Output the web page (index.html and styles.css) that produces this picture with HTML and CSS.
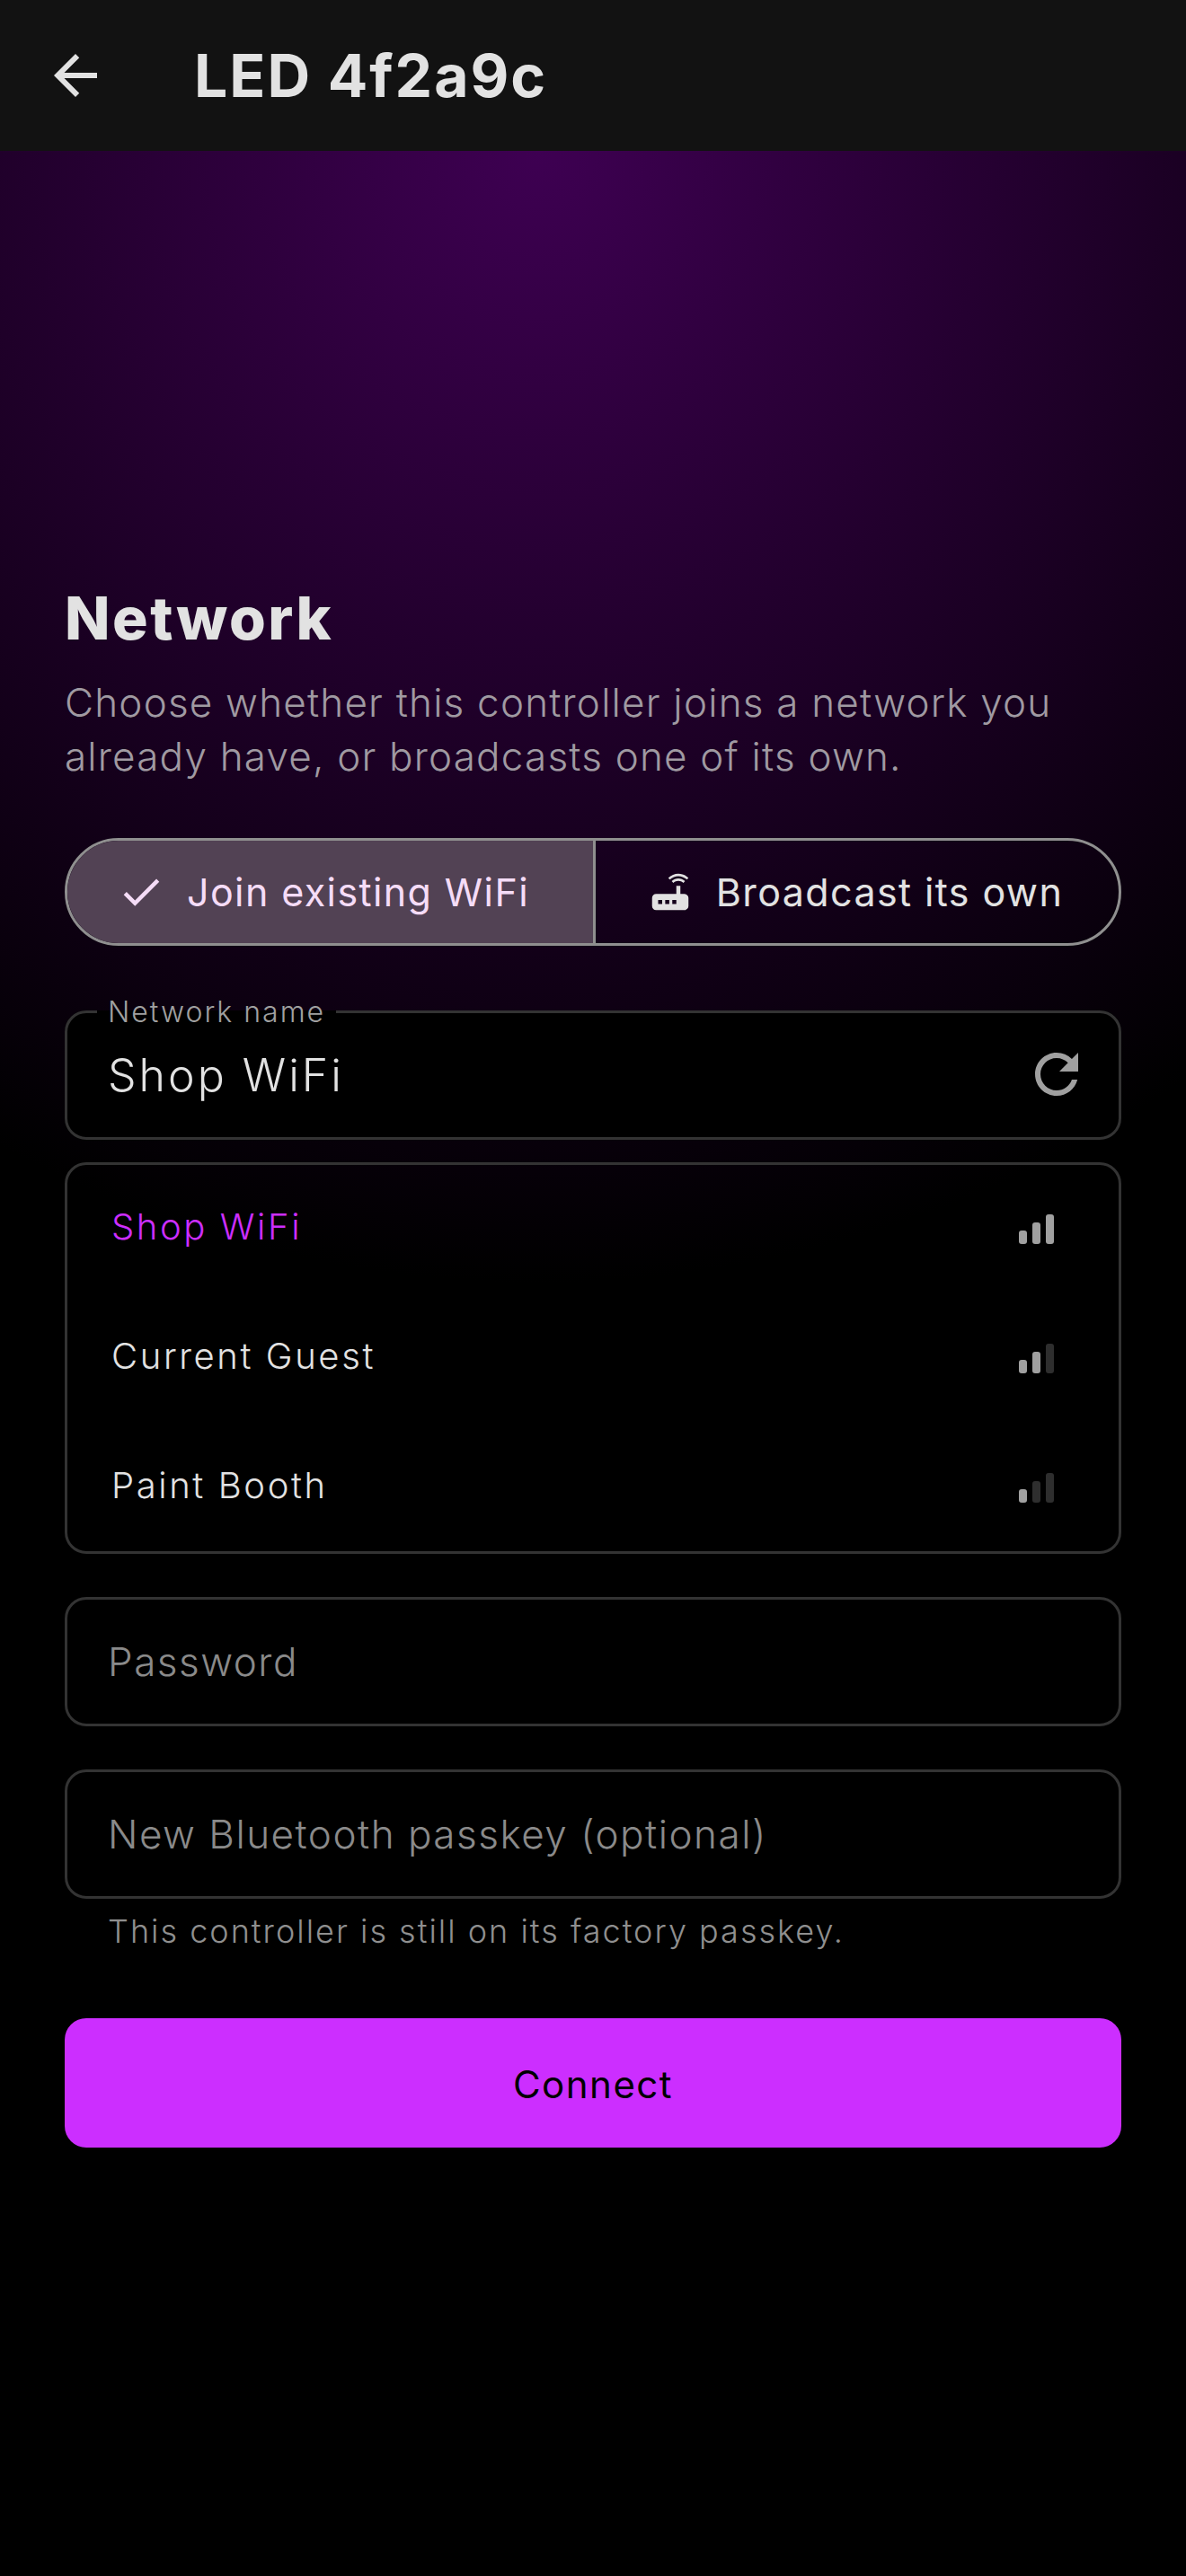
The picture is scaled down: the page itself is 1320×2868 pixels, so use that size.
FILE: index.html
```html
<!DOCTYPE html>
<html lang="en">
<head>
    <meta charset="UTF-8">
    <meta name="viewport" content="width=device-width, initial-scale=1.0">
    <title>LED 4f2a9c</title>
    <link rel="stylesheet" href="styles.css">
</head>
<body>
    <header class="app-bar">
        <svg class="back-icon" viewBox="0 0 24 24"><path d="M20 11H7.83l5.59-5.59L12 4l-8 8 8 8 1.41-1.41L7.83 13H20v-2z"/></svg>
        <h1>LED 4f2a9c</h1>
    </header>

    <main class="content">
        <h2>Network</h2>
        <p class="intro">Choose whether this controller joins a network you already have, or broadcasts one of its own.</p>

        <div class="segments">
            <div class="segment selected">
                <svg class="seg-icon" viewBox="0 0 24 24"><path d="M9 16.17L4.83 12l-1.42 1.41L9 19 21 7l-1.41-1.41z"/></svg>
                <span>Join existing WiFi</span>
            </div>
            <div class="segment">
                <svg class="seg-icon" viewBox="0 0 24 24"><path d="M20.2 5.9l.8-.8C19.6 3.7 17.8 3 16 3s-3.6.7-5 2.1l.8.8C13 4.8 14.5 4.2 16 4.2s3 .6 4.2 1.7zm-.9.8c-.9-.9-2.1-1.4-3.3-1.4s-2.4.5-3.3 1.4l.8.8c.7-.7 1.6-1 2.5-1 .9 0 1.8.3 2.5 1l.8-.8zM19 13h-2V9h-2v4H5c-1.1 0-2 .9-2 2v4c0 1.1.9 2 2 2h14c1.1 0 2-.9 2-2v-4c0-1.1-.9-2-2-2zM8 18H6v-2h2v2zm3.5 0h-2v-2h2v2zm3.5 0h-2v-2h2v2z"/></svg>
                <span>Broadcast its own</span>
            </div>
        </div>

        <fieldset class="field name-field">
            <legend>Network name</legend>
            <span class="field-value">Shop WiFi</span>
            <svg class="refresh-icon" viewBox="0 0 24 24"><path d="M17.65 6.35A7.958 7.958 0 0 0 12 4c-4.42 0-7.99 3.58-7.99 8s3.57 8 7.99 8c3.73 0 6.84-2.55 7.73-6h-2.08A5.99 5.99 0 0 1 12 18c-3.31 0-6-2.69-6-6s2.69-6 6-6c1.66 0 3.14.69 4.22 1.78L13 11h7V4l-2.35 2.35z"/></svg>
        </fieldset>

        <ul class="network-list">
            <li class="network current">
                <span>Shop WiFi</span>
                <div class="bars"><i class="bar b1"></i><i class="bar b2"></i><i class="bar b3"></i></div>
            </li>
            <li class="network">
                <span>Current Guest</span>
                <div class="bars"><i class="bar b1"></i><i class="bar b2"></i><i class="bar b3 off"></i></div>
            </li>
            <li class="network">
                <span>Paint Booth</span>
                <div class="bars"><i class="bar b1"></i><i class="bar b2 off"></i><i class="bar b3 off"></i></div>
            </li>
        </ul>

        <div class="field password-field"><span class="placeholder">Password</span></div>
        <div class="field passkey-field"><span class="placeholder">New Bluetooth passkey (optional)</span></div>
        <p class="helper">This controller is still on its factory passkey.</p>

        <button class="connect" type="button">Connect</button>
    </main>
</body>
</html>
```

FILE: styles.css
```css
* {
    box-sizing: border-box;
}

html, body {
    margin: 0;
    padding: 0;
    background: #000;
}

body {
    min-height: 2868px;
    font-family: Inter, "Noto Sans", sans-serif;
    color: #e2e2e2;
    background-image: radial-gradient(circle 1260px at 600px 168px, #3e0052 0%, #000 100%);
    background-repeat: no-repeat;
}

.app-bar {
    display: flex;
    align-items: center;
    height: 168px;
    padding-left: 48px;
    background: #121212;
}

.back-icon {
    width: 72px;
    height: 72px;
    fill: #e2e2e2;
}

.app-bar h1 {
    margin: 0 0 0 96px;
    font-size: 66px;
    font-weight: 700;
    letter-spacing: 2px;
}

.content {
    display: flex;
    flex-direction: column;
    padding: 478px 72px 0;
}

h2 {
    margin: 0;
    font-size: 66px;
    line-height: 84px;
    font-weight: 800;
    letter-spacing: 2.5px;
}

.intro {
    margin: 22px 0 0;
    font-size: 44px;
    line-height: 60px;
    font-weight: 300;
    letter-spacing: 1.2px;
    color: #a09aa2;
}

.segments {
    display: grid;
    grid-template-columns: 1fr 1fr;
    height: 120px;
    margin-top: 61px;
    border: 3px solid #8f8f8f;
    border-radius: 60px;
    overflow: hidden;
}

.segment {
    display: flex;
    align-items: center;
    justify-content: center;
    gap: 24px;
    padding-right: 16px;
    font-size: 43px;
    letter-spacing: 1.4px;
}

.segment + .segment {
    padding-right: 6px;
    border-left: 3px solid #8f8f8f;
}

.segment.selected {
    background: #524254;
    color: #f5dcf7;
}

.seg-icon {
    width: 54px;
    height: 54px;
    fill: currentColor;
}

.field {
    position: relative;
    display: flex;
    align-items: center;
    margin: 0;
    height: 144px;
    padding: 0 45px;
    border: 3px solid #333;
    border-radius: 24px;
    background: #000;
}

.name-field {
    display: block;
    margin-top: 60px;
    height: 156px;
}

.name-field legend {
    padding: 0 12px;
    margin-left: -12px;
    font-size: 32px;
    line-height: 27px;
    font-weight: 300;
    letter-spacing: 2px;
    color: #a0a0a0;
}

.field-value {
    display: block;
    margin-top: 15px;
    font-size: 50px;
    line-height: 84px;
    font-weight: 300;
    letter-spacing: 3px;
}

.refresh-icon {
    position: absolute;
    right: 33px;
    top: 20px;
    width: 72px;
    height: 72px;
    fill: #a0a0a0;
}

.network-list {
    display: flex;
    flex-direction: column;
    justify-content: center;
    height: 436px;
    margin: 25px 0 0;
    padding: 0;
    list-style: none;
    border: 3px solid #333;
    border-radius: 24px;
}

.network {
    flex: none;
    display: flex;
    align-items: center;
    justify-content: space-between;
    height: 144px;
    padding: 0 72px 0 49px;
    font-size: 40px;
    font-weight: 300;
    letter-spacing: 2.6px;
}

.network span {
    margin-bottom: 6px;
}

.network.current {
    color: #cc2eff;
}

.bars {
    display: flex;
    align-items: flex-end;
    gap: 6px;
}

.bar {
    width: 9px;
    border-radius: 3px;
    background: #a0a0a0;
}

.bar.off {
    background: #2e2e2e;
}

.b1 { height: 15px; }
.b2 { height: 24px; }
.b3 { height: 33px; }

.password-field {
    margin-top: 48px;
}

.passkey-field {
    margin-top: 48px;
}

.placeholder {
    font-size: 44px;
    font-weight: 300;
    letter-spacing: 1.5px;
    color: #8a8a8a;
}

.helper {
    margin: 16px 0 0 48px;
    font-size: 36px;
    line-height: 40px;
    font-weight: 300;
    letter-spacing: 2px;
    color: #8f8f8f;
}

.connect {
    height: 144px;
    margin-top: 77px;
    padding-top: 3px;
    border: 0;
    border-radius: 24px;
    background: #cc2eff;
    font-family: Inter, "Noto Sans", sans-serif;
    font-size: 42px;
    font-weight: 400;
    letter-spacing: 1.5px;
    color: #000;
}
```
